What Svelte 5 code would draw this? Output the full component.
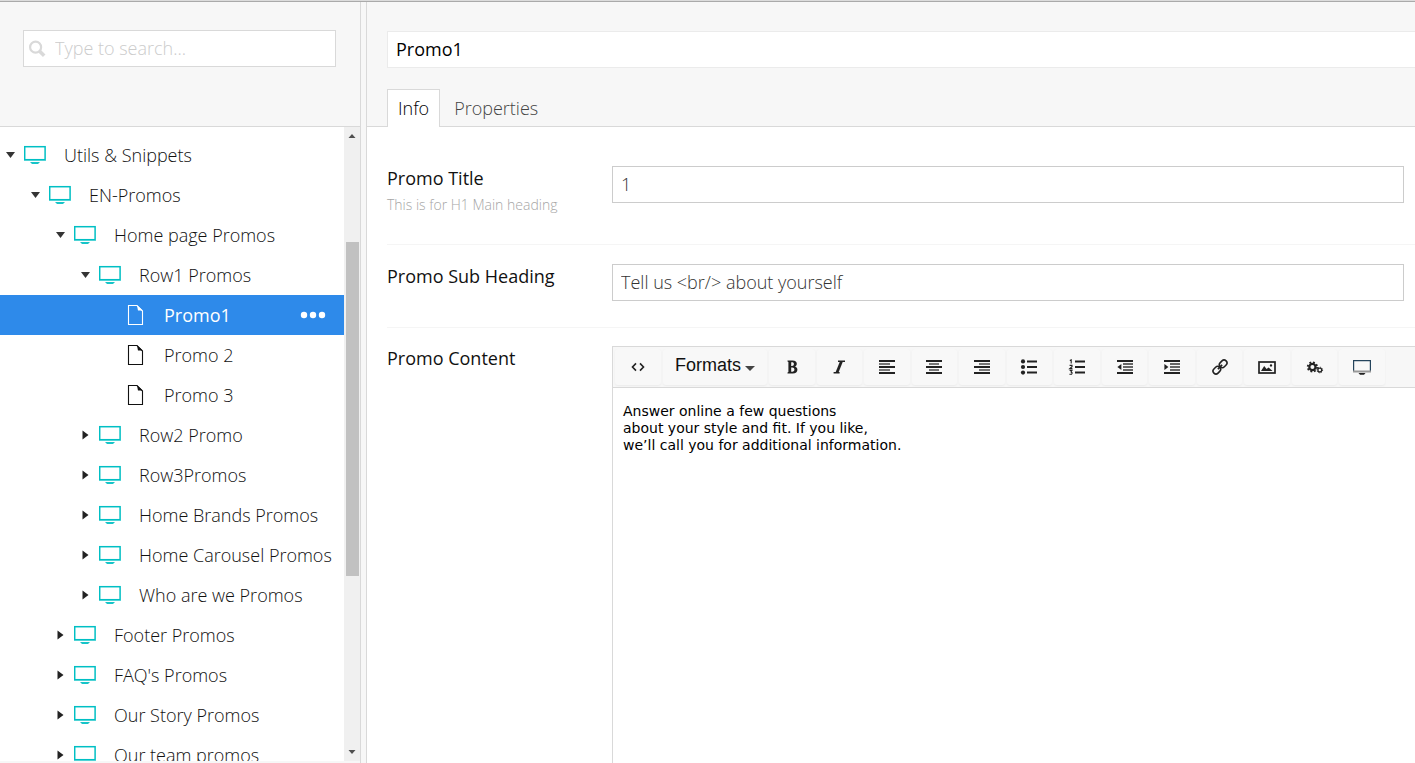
<script>
  const nodes = [
    { name: 'Utils & Snippets', depth: 0, open: true },
    { name: 'EN-Promos', depth: 1, open: true },
    { name: 'Home page Promos', depth: 2, open: true },
    { name: 'Row1 Promos', depth: 3, open: true },
    { name: 'Promo1', depth: 4, doc: true },
    { name: 'Promo 2', depth: 4, doc: true },
    { name: 'Promo 3', depth: 4, doc: true },
    { name: 'Row2 Promo', depth: 3 },
    { name: 'Row3Promos', depth: 3 },
    { name: 'Home Brands Promos', depth: 3 },
    { name: 'Home Carousel Promos', depth: 3 },
    { name: 'Who are we Promos', depth: 3 },
    { name: 'Footer Promos', depth: 2 },
    { name: "FAQ's Promos", depth: 2 },
    { name: 'Our Story Promos', depth: 2 },
    { name: 'Our team promos', depth: 2 }
  ];

  const tools = [
    'Bold', 'Italic', 'Align left', 'Align center', 'Align right', 'Bullet list', 'Numbered list',
    'Outdent', 'Indent', 'Link', 'Image', 'Macro', 'Embed'
  ];

  let selected = $state('Promo1');
  let title = $state('Promo1');
  let promoTitle = $state('1');
  let subHeading = $state('Tell us <br/> about yourself');
  let content = $state(
    'Answer online a few questions\nabout your style and fit. If you like,\nwe’ll call you for additional information.'
  );
</script>

<div class="app">
  <aside>
    <div class="side-head">
      <label class="search">
        <svg width="18" height="18" viewBox="0 0 18 18" aria-hidden="true">
          <circle cx="6.6" cy="7.2" r="5.5" fill="none" stroke="#d9d9d9" stroke-width="2.2" />
          <path d="M10.4 11 L15.2 15.8" stroke="#d9d9d9" stroke-width="3.6" />
        </svg>
        <input type="text" placeholder="Type to search..." aria-label="Type to search" />
      </label>
    </div>
    <div class="tree-wrap">
      <ul class="tree">
        {#each nodes as node}
          <li class:selected={node.name === selected} style="padding-left: {node.depth * 25}px">
            {#if node.doc}
              <span class="caret"></span>
            {:else}
              <button class="caret" aria-label="Toggle {node.name}">
                <svg width="10" height="10" viewBox="0 0 10 10">
                  {#if node.open}
                    <path d="M0 2 H9 L4.5 8 Z" fill="#343434" />
                  {:else}
                    <path d="M1.5 0.5 V9.5 L7.5 5 Z" fill="#222" />
                  {/if}
                </svg>
              </button>
            {/if}
            <a href="#{node.name}" onclick={() => (selected = node.name)}>
              {#if node.doc}
                <svg class="icon" width="22" height="22" viewBox="0 0 22 22">
                  <path d="M4.5 1.5 H13 L18.5 7 V20.5 H4.5 Z" fill="none" stroke="currentColor" stroke-width="1.1" />
                  <path d="M13 1.2 L18.8 6.5 H14 Z" fill="currentColor" />
                </svg>
              {:else}
                <svg class="icon" width="22" height="22" viewBox="0 0 22 22">
                  <path d="M0 16.5 H22" stroke="#8fe3e4" stroke-width="1" />
                  <rect x="0.7" y="2.7" width="20.4" height="13" fill="none" stroke="#00bfc4" stroke-width="1.5" />
                  <path d="M6 18 H16 L14 20 H8 Z" fill="#17c4c8" />
                </svg>
              {/if}
              <span>{node.name}</span>
            </a>
            {#if node.name === selected}
              <button class="more" aria-label="Actions">
                <svg width="26" height="8" viewBox="0 0 26 8">
                  <circle cx="4" cy="4" r="3.2" fill="#fff" />
                  <circle cx="13" cy="4" r="3.2" fill="#fff" />
                  <circle cx="22" cy="4" r="3.2" fill="#fff" />
                </svg>
              </button>
            {/if}
          </li>
        {/each}
      </ul>
      <div class="scrollbar" aria-hidden="true">
        <svg width="8" height="16" viewBox="0 0 8 16"><path d="M0.5 11 L4 7 L7.5 11 Z" fill="#505050" /></svg>
        <div class="track"><div class="thumb"></div></div>
        <svg width="8" height="16" viewBox="0 0 8 16"><path d="M0.5 5 L4 9 L7.5 5 Z" fill="#505050" /></svg>
      </div>
    </div>
  </aside>

  <main>
    <header>
      <input class="title" type="text" aria-label="Name" bind:value={title} />
      <nav>
        <button class="tab active">Info</button>
        <button class="tab">Properties</button>
      </nav>
    </header>

    <form>
      <div class="row first">
        <div class="caption">
          <label for="promo-title">Promo Title</label>
          <small>This is for H1 Main heading</small>
        </div>
        <input id="promo-title" type="text" bind:value={promoTitle} />
      </div>
      <div class="row">
        <div class="caption"><label for="sub-heading">Promo Sub Heading</label></div>
        <input id="sub-heading" type="text" bind:value={subHeading} />
      </div>
      <div class="row last">
        <div class="caption"><label for="content">Promo Content</label></div>
        <div class="editor">
          <div class="toolbar">
            <button type="button" class="tool code" aria-label="Source code">
              <svg width="16" height="16" viewBox="0 0 16 16" fill="none" stroke="#222" stroke-width="1.6">
                <path d="M6 4.4 L2.5 8 L6 11.6 M10 4.4 L13.5 8 L10 11.6" />
              </svg>
            </button>
            <button type="button" class="tool formats">
              Formats
              <svg width="10" height="6" viewBox="0 0 10 6"><path d="M0 1 H10 L5 6 Z" fill="#444" /></svg>
            </button>
            <div class="tools">
              {#each tools as tool}
                <button type="button" class="tool" aria-label={tool}>
                  <svg width="18" height="16" viewBox="0 0 18 16" fill="none" stroke="#222" stroke-width="2">
                    {#if tool === 'Bold'}
                      <path fill="#222" fill-rule="evenodd" stroke="none" d="M4.5 1.5 H9.5 C12.6 1.5 13.8 3 13.8 4.8 C13.8 6.2 13 7.2 11.9 7.6 C13.5 8 14.4 9.2 14.4 10.8 C14.4 13 12.8 14.5 9.8 14.5 H4.5 V13.4 L5.4 13 V3 L4.5 2.6 Z M8.2 3.3 V6.9 H9 C10.3 6.9 10.9 6.2 10.9 5 C10.9 3.9 10.3 3.3 9 3.3 Z M8.2 8.6 V12.7 H9.3 C10.7 12.7 11.4 12 11.4 10.6 C11.4 9.3 10.6 8.6 9.2 8.6 Z" />
                    {:else if tool === 'Italic'}
                      <path d="M8 2.2 H15 M3.6 13.8 H9.6" stroke-width="1.4" />
                      <path d="M11.4 2.5 L7 13.5" stroke-width="2.8" />
                    {:else if tool === 'Align left'}
                      <path d="M1 2 H17 M1 8 H17 M1 14 H17" />
                      <path d="M1 5 H12 M1 11 H12" stroke="#777" />
                    {:else if tool === 'Align center'}
                      <path d="M1 2 H17 M1 8 H17 M1 14 H17" />
                      <path d="M4 5 H14 M4 11 H14" stroke="#777" />
                    {:else if tool === 'Align right'}
                      <path d="M1 2 H17 M1 8 H17 M1 14 H17" />
                      <path d="M6 5 H17 M6 11 H17" stroke="#777" />
                    {:else if tool === 'Bullet list'}
                      <path d="M7 2.5 H17 M7 8 H17 M7 13.5 H17" />
                      <g fill="#222" stroke="none">
                        <circle cx="3" cy="2.4" r="2.1" /><circle cx="3" cy="8" r="2.1" /><circle cx="3" cy="13.6" r="2.1" />
                      </g>
                    {:else if tool === 'Numbered list'}
                      <path d="M7 2.5 H17 M7 8 H17 M7 13.5 H17" stroke-width="1.8" />
                      <path d="M1.8 1.4 L3.2 0.8 V4.6 M1.6 6.4 H4 V7.8 L1.8 9.6 H4.4 M1.6 11.4 H4 L3 13 L4.2 14 L3.6 15.3 H1.4" stroke-width="1.1" />
                    {:else if tool === 'Outdent'}
                      <path d="M1 2 H17 M1 14 H17" />
                      <path d="M7 5 H17 M7 8 H17 M7 11 H17" stroke="#666" />
                      <path d="M5.4 5 V11 L1.4 8 Z" fill="#222" stroke="none" />
                    {:else if tool === 'Indent'}
                      <path d="M1 2 H17 M1 14 H17" />
                      <path d="M7 5 H17 M7 8 H17 M7 11 H17" stroke="#666" />
                      <path d="M1.4 5 V11 L5.4 8 Z" fill="#222" stroke="none" />
                    {:else if tool === 'Link'}
                      <g transform="rotate(-45 9 8)" stroke-width="1.6">
                        <rect x="0.4" y="5.1" width="8.2" height="5.8" rx="2.9" />
                        <rect x="9.4" y="5.1" width="8.2" height="5.8" rx="2.9" />
                        <path d="M6 8 H12" />
                      </g>
                    {:else if tool === 'Image'}
                      <rect x="1" y="3" width="16" height="11" stroke-width="1.7" />
                      <path d="M3 12 L6.2 7 L8.6 10 L10.6 8.4 L14.6 12 Z" fill="#222" stroke="none" />
                      <circle cx="13" cy="6.4" r="1.2" fill="#222" stroke="none" />
                    {:else if tool === 'Macro'}
                      <circle cx="6.4" cy="8" r="3.1" stroke-width="2.2" />
                      <circle cx="6.4" cy="8" r="4.7" stroke-width="1.8" stroke-dasharray="1.85 1.85" />
                      <circle cx="13.8" cy="11" r="1.9" stroke-width="1.3" />
                      <circle cx="13.8" cy="11" r="2.8" stroke-width="1" stroke-dasharray="1.1 1.1" />
                    {:else}
                      <path d="M0.6 12.6 V1.6 H17.4 V12.6" stroke="#24445c" stroke-width="1.2" />
                      <path d="M0 12.5 H18" stroke="#999" stroke-width="2" />
                      <path d="M5.5 14 H12.5 L11 15.8 H7 Z" fill="#222" stroke="none" />
                    {/if}
                  </svg>
                </button>
              {/each}
            </div>
          </div>
          <textarea id="content" spellcheck="false" bind:value={content}></textarea>
        </div>
      </div>
    </form>
  </main>
</div>

<style>
  :global(body) {
    margin: 0;
    overflow: hidden;
  }
  .app, .app * {
    box-sizing: border-box;
  }
  .app {
    display: flex;
    height: 100vh;
    border-top: 1px solid #dcdcdc;
    background: #f7f7f7;
    box-shadow: inset 0 1px #aaa;
    font-family: 'Open Sans', sans-serif;
    font-size: 18px;
    font-weight: 320;
    color: #111;
  }
  button, input, textarea {
    font: inherit;
    color: inherit;
    margin: 0;
    border: 0;
    padding: 0;
    background: none;
    outline: none;
  }
  aside {
    display: flex;
    flex-direction: column;
    flex: none;
    width: 361px;
    margin-top: 1px;
    border-right: 1px solid #d9d9d9;
  }
  .side-head {
    height: 125px;
    padding: 28px 24px 0 23px;
    border-bottom: 1px solid #d9d9d9;
  }
  .search {
    display: flex;
    align-items: center;
    height: 37px;
    padding-left: 5px;
    border: 1px solid #d9d9d9;
    background: #fff;
  }
  .search input {
    flex: 1;
    min-width: 0;
    padding: 0 0 2px 8px;
  }
  .search input::placeholder {
    color: #ccc;
    opacity: 1;
  }
  .tree-wrap {
    display: flex;
    flex: 1;
    min-height: 0;
    margin-bottom: 2px;
    background: #fff;
  }
  .tree {
    flex: 1;
    margin: 0;
    padding: 8px 0 0;
    overflow: hidden;
    list-style: none;
  }
  li {
    display: flex;
    align-items: center;
    height: 40px;
  }
  li.selected {
    background: #2e8aea;
    color: #fff;
    font-weight: 400;
  }
  .caret {
    display: flex;
    width: 24px;
    padding-left: 6px;
  }
  li a {
    display: flex;
    flex: 1;
    align-items: center;
    gap: 18px;
    color: inherit;
    text-decoration: none;
    white-space: nowrap;
  }
  .icon {
    flex: none;
  }
  .more {
    display: flex;
    margin-right: 18px;
  }
  .scrollbar {
    display: flex;
    flex-direction: column;
    align-items: center;
    width: 16px;
    background: #f0f0f0;
  }
  .track {
    flex: 1;
    width: 13px;
    padding-top: 99px;
  }
  .thumb {
    height: 66.4%;
    background: #c1c1c1;
  }
  main {
    display: flex;
    flex: 1;
    flex-direction: column;
    min-width: 0;
    margin: 1px 0 0 5px;
    border-left: 1px solid #d9d9d9;
    background: #fff;
  }
  header {
    display: flex;
    flex-direction: column;
    justify-content: space-between;
    height: 125px;
    padding: 29px 0 0 20px;
    border-bottom: 1px solid #d9d9d9;
    background: #f7f7f7;
  }
  .title {
    height: 37px;
    padding: 0 8px 2px;
    border: 1px solid #ebebeb;
    border-right: 0;
    background: #fff;
    color: #000;
    font-weight: 530;
  }
  nav {
    display: flex;
    gap: 3px;
    margin-bottom: -1px;
  }
  .tab {
    height: 38px;
    padding: 0 10px 2px;
    border: 1px solid transparent;
    border-bottom: 0;
    color: #444;
  }
  .tab.active {
    border-color: #d9d9d9;
    background: #fff;
    color: #000;
  }
  form {
    display: flex;
    flex: 1;
    flex-direction: column;
    padding: 20px 0 0 20px;
  }
  .row {
    display: flex;
    align-items: flex-start;
    padding: 19px 0 26px;
    border-bottom: 1px solid #f5f5f5;
  }
  .row.last {
    flex: 1;
    align-items: stretch;
    padding: 18px 0 0;
    border: 0;
  }
  .caption {
    display: flex;
    flex: none;
    flex-direction: column;
    width: 225px;
    line-height: 24px;
  }
  .caption label {
    font-weight: 530;
  }
  .caption small {
    padding: 5px 0 3px;
    color: #a6a6a6;
    font-size: 14px;
    font-weight: 350;
    line-height: 20px;
  }
  .row > input {
    flex: 1;
    min-width: 0;
    height: 37px;
    margin-right: 11px;
    padding: 0 8px 2px;
    border: 1px solid #ccc;
    color: #333;
  }
  .editor {
    display: flex;
    flex: 1;
    flex-direction: column;
    min-width: 0;
    border: 1px solid #d9d9d9;
    border-width: 1px 0 0 1px;
  }
  .toolbar {
    display: flex;
    gap: 2px;
    height: 41px;
    padding: 2px;
    border-bottom: 1px solid #d9d9d9;
    background: #f7f7f7;
  }
  .tools {
    display: grid;
    grid-template-columns: repeat(13, 1fr);
    gap: 2px;
    width: 616px;
  }
  .tool {
    display: flex;
    align-items: center;
    justify-content: center;
    border-radius: 3px;
    background: #f8f8f8;
    box-shadow: 0 1px 2px rgba(0, 0, 0, 0.05);
  }
  .code {
    width: 46px;
  }
  .formats {
    gap: 4px;
    width: 104px;
    padding-bottom: 3px;
    color: #111;
    font-family: 'Liberation Sans', sans-serif;
    font-weight: 400;
  }
  .formats svg {
    margin-top: 4px;
  }
  textarea {
    flex: 1;
    padding: 15px 10px;
    resize: none;
    color: #000;
    font-family: 'DejaVu Sans', sans-serif;
    font-size: 14px;
    font-weight: 400;
    line-height: 17px;
  }
</style>
